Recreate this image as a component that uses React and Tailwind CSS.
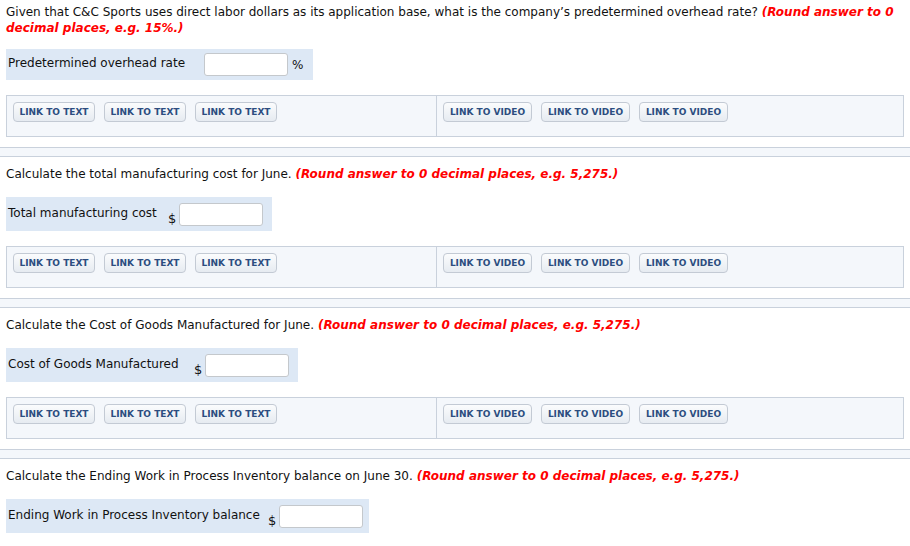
import React from "react";

const font = { fontFamily: '"DejaVu Sans", Verdana, sans-serif' };

function LinkButton({ label, w }) {
  return (
    <button className={`${w} h-[20px] rounded-[4px] border border-[#c3cad4] bg-gradient-to-b from-[#fbfcfd] to-[#e6ebf1] text-[9px] font-bold text-[#2c4d80] leading-none`}>
      {label}
    </button>
  );
}

function LinksPanel() {
  return (
    <div className="mx-[6px] flex h-[42px] border border-[#c9d1dc] bg-[#f4f7fb]">
      <div className="flex w-[430px] gap-[9px] border-r border-[#c9d1dc] pl-[6px] pt-[6px]">
        <LinkButton label="LINK TO TEXT" w="w-[82px]" />
        <LinkButton label="LINK TO TEXT" w="w-[82px]" />
        <LinkButton label="LINK TO TEXT" w="w-[82px]" />
      </div>
      <div className="flex flex-1 gap-[9px] pl-[6px] pt-[6px]">
        <LinkButton label="LINK TO VIDEO" w="w-[89px]" />
        <LinkButton label="LINK TO VIDEO" w="w-[89px]" />
        <LinkButton label="LINK TO VIDEO" w="w-[89px]" />
      </div>
    </div>
  );
}

function Band() {
  return <div className="mt-[10px] h-[10px] border-y border-[#c9d1dc] bg-[#f4f7fb]" />;
}

function AnswerBox({ label, prefix, suffix, lw, h = "h-[34px]", pr = "pr-[9px]" }) {
  return (
    <div className={`mx-[6px] inline-flex ${h} items-center bg-[#dde8f5] pl-[2px] ${pr}`}>
      <span className={`${lw} -mt-[3px]`}>{label}</span>
      {prefix && <span className="self-end mb-[6px] w-[11px] text-[13px] leading-none">{prefix}</span>}
      <input className="h-[23px] w-[84px] rounded-[3px] border border-[#c4c8cc] bg-white" />
      {suffix && <span className="ml-[4px] mr-[1px]">{suffix}</span>}
    </div>
  );
}

function Question({ children, red, pt }) {
  return (
    <p className={`px-[6px] ${pt} leading-[16px] text-[#111]`}>
      {children} <span className="font-bold italic text-[#ff0000]">{red}</span>
    </p>
  );
}

export default function App() {
  return (
    <div className="w-[910px] bg-white text-[12px] text-[#111]" style={font}>
      <Question pt="pt-[4px]" red="(Round answer to 0 decimal places, e.g. 15%.)">
        Given that C&amp;C Sports uses direct labor dollars as its application base, what is the company’s predetermined overhead rate?
      </Question>
      <div className="mt-[13px]">
        <AnswerBox label="Predetermined overhead rate" suffix="%" lw="w-[196px]" h="h-[31px]" />
      </div>
      <div className="mt-[15px]">
        <LinksPanel />
      </div>
      <Band />

      <Question pt="pt-[9px]" red="(Round answer to 0 decimal places, e.g. 5,275.)">
        Calculate the total manufacturing cost for June.
      </Question>
      <div className="mt-[15px]">
        <AnswerBox label="Total manufacturing cost" prefix="$" lw="w-[160px]" />
      </div>
      <div className="mt-[15px]">
        <LinksPanel />
      </div>
      <Band />

      <Question pt="pt-[9px]" red="(Round answer to 0 decimal places, e.g. 5,275.)">
        Calculate the Cost of Goods Manufactured for June.
      </Question>
      <div className="mt-[15px]">
        <AnswerBox label="Cost of Goods Manufactured" prefix="$" lw="w-[186px]" />
      </div>
      <div className="mt-[15px]">
        <LinksPanel />
      </div>
      <Band />

      <Question pt="pt-[9px]" red="(Round answer to 0 decimal places, e.g. 5,275.)">
        Calculate the Ending Work in Process Inventory balance on June 30.
      </Question>
      <div className="mt-[15px] pb-[20px]">
        <AnswerBox label="Ending Work in Process Inventory balance" prefix="$" lw="w-[260px]" pr="pr-[6px]" />
      </div>
    </div>
  );
}
